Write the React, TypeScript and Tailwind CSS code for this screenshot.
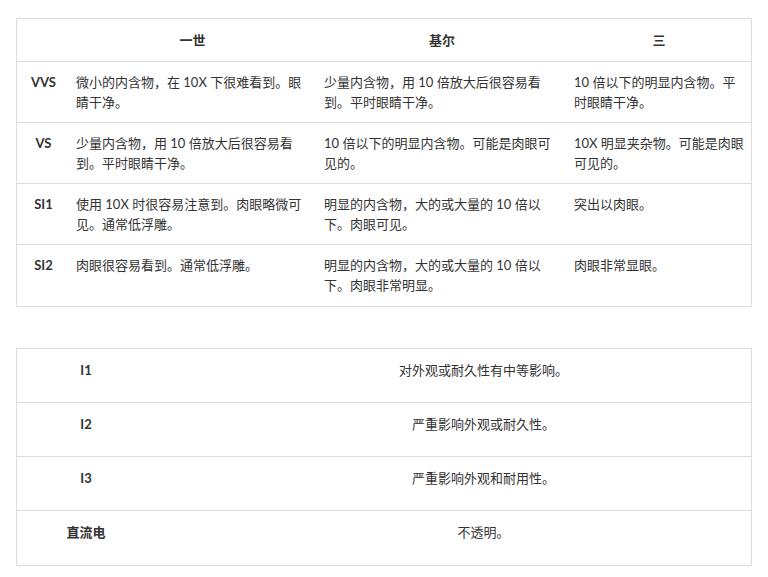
export default function App() {
  const f = { fontFamily: 'Lato, "Noto Sans CJK SC", sans-serif' };
  const rows = [
    ["VVS", "微小的内含物，在 10X 下很难看到。眼睛干净。", "少量内含物，用 10 倍放大后很容易看到。平时眼睛干净。", "10 倍以下的明显内含物。平时眼睛干净。"],
    ["VS", "少量内含物，用 10 倍放大后很容易看到。平时眼睛干净。", "10 倍以下的明显内含物。可能是肉眼可见的。", "10X 明显夹杂物。可能是肉眼可见的。"],
    ["SI1", "使用 10X 时很容易注意到。肉眼略微可见。通常低浮雕。", "明显的内含物，大的或大量的 10 倍以下。肉眼可见。", "突出以肉眼。"],
    ["SI2", "肉眼很容易看到。通常低浮雕。", "明显的内含物，大的或大量的 10 倍以下。肉眼非常明显。", "肉眼非常显眼。"],
  ];
  const rows2 = [["I1", "对外观或耐久性有中等影响。"], ["I2", "严重影响外观或耐久性。"], ["I3", "严重影响外观和耐用性。"], ["直流电", "不透明。"]];
  return (
    <div className="bg-white w-[768px] h-[577px] pt-[18px] px-4 text-[13px] leading-[20px] text-[#333]" style={f}>
      <div className="border border-[#ddd] w-[736px]">
        <div className="flex h-[43px] items-center font-bold border-b border-[#ddd]">
          <div className="w-[51px]" />
          <div className="w-[249px] text-center">一世</div>
          <div className="w-[250px] text-center">基尔</div>
          <div className="flex-1 text-center">三</div>
        </div>
        {rows.map((r, i) => (
          <div key={i} className={"flex h-[61px] pt-[10px] " + (i < 3 ? "border-b border-[#ddd]" : "h-[60px]")}>
            <div className="w-[51px] text-center font-bold pl-[2px]">{r[0]}</div>
            <div className="w-[249px] pl-[8px] pr-[6px]">{r[1]}</div>
            <div className="w-[250px] pl-[7px] pr-[6px]">{r[2]}</div>
            <div className="flex-1 pl-[7px] pr-[6px]">{r[3]}</div>
          </div>
        ))}
      </div>
      <div className="border border-[#ddd] w-[736px] mt-[41px]">
        {rows2.map((r, i) => (
          <div key={i} className={"flex h-[54px] pt-[11px] " + (i < 3 ? "border-b border-[#ddd]" : "h-[53px]")}>
            <div className="w-[199px]"><div className="w-[138px] text-center font-bold">{r[0]}</div></div>
            <div className="flex-1 text-center">{r[1]}</div>
          </div>
        ))}
      </div>
    </div>
  );
}
